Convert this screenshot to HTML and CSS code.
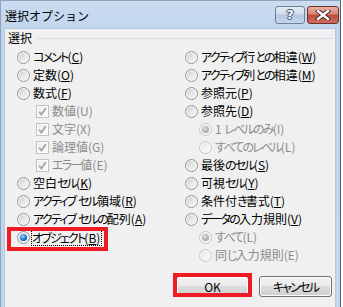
FILE: index.html
```html
<!DOCTYPE html>
<html lang="ja">
<head>
<meta charset="utf-8">
<link rel="stylesheet" href="styles.css">
</head>
<body>
<div class="window">
  <div class="titlebar">
    <span class="title">選択オプション</span>
    <div class="caption">
      <span class="cap-btn help">?</span>
      <span class="cap-btn close"><svg width="16" height="10" viewBox="0 0 16 10"><path d="M3 1 L13 9 M13 1 L3 9" stroke="#3a2020" stroke-width="4.2" stroke-linecap="square"/><path d="M3 1 L13 9 M13 1 L3 9" stroke="#ffffff" stroke-width="2.4" stroke-linecap="square"/></svg></span>
    </div>
  </div>
  <div class="client">
    <div class="group-head"><span class="group-label">選択</span><span class="group-line"></span></div>
    <div class="columns">
      <div class="col">
        <div class="row"><span class="radio"></span><span class="lbl"><span class="k">コメント</span>(<u>C</u>)</span></div>
        <div class="row"><span class="radio"></span><span class="lbl">定数(<u>O</u>)</span></div>
        <div class="row"><span class="radio"></span><span class="lbl">数式(<u>F</u>)</span></div>
        <div class="row sub"><span class="check"><svg width="13" height="13" viewBox="0 0 13 13"><path d="M3.2 6.8 L5.4 9.6 L9.8 3.2" fill="none" stroke="#a4a4a4" stroke-width="1.8"/></svg></span><span class="lbl off">数値(U)</span></div>
        <div class="row sub"><span class="check"><svg width="13" height="13" viewBox="0 0 13 13"><path d="M3.2 6.8 L5.4 9.6 L9.8 3.2" fill="none" stroke="#a4a4a4" stroke-width="1.8"/></svg></span><span class="lbl off">文字(X)</span></div>
        <div class="row sub"><span class="check"><svg width="13" height="13" viewBox="0 0 13 13"><path d="M3.2 6.8 L5.4 9.6 L9.8 3.2" fill="none" stroke="#a4a4a4" stroke-width="1.8"/></svg></span><span class="lbl off">論理値(G)</span></div>
        <div class="row sub"><span class="check"><svg width="13" height="13" viewBox="0 0 13 13"><path d="M3.2 6.8 L5.4 9.6 L9.8 3.2" fill="none" stroke="#a4a4a4" stroke-width="1.8"/></svg></span><span class="lbl off"><span class="k">エラー</span>値(E)</span></div>
        <div class="row"><span class="radio"></span><span class="lbl">空白<span class="k">セル</span>(<u>K</u>)</span></div>
        <div class="row"><span class="radio"></span><span class="lbl"><span class="k">アクティブ</span> <span class="k">セル</span>領域(<u>R</u>)</span></div>
        <div class="row"><span class="radio"></span><span class="lbl"><span class="k">アクティブ</span> <span class="k">セルの</span>配列(<u>A</u>)</span></div>
        <div class="row marked"><span class="radio on"></span><span class="lbl focus"><span class="k">オブジェクト</span>(<u>B</u>)</span></div>
      </div>
      <div class="col">
        <div class="row"><span class="radio"></span><span class="lbl"><span class="k">アクティブ</span>行<span class="k">との</span>相違(<u>W</u>)</span></div>
        <div class="row"><span class="radio"></span><span class="lbl"><span class="k">アクティブ</span>列<span class="k">との</span>相違(<u>M</u>)</span></div>
        <div class="row"><span class="radio"></span><span class="lbl">参照元(<u>P</u>)</span></div>
        <div class="row"><span class="radio"></span><span class="lbl">参照先(<u>D</u>)</span></div>
        <div class="row subr"><span class="radio dis on"></span><span class="lbl off">1 <span class="k">レベルのみ</span>(I)</span></div>
        <div class="row subr"><span class="radio dis"></span><span class="lbl off"><span class="k">すべてのレベル</span>(L)</span></div>
        <div class="row"><span class="radio"></span><span class="lbl">最後<span class="k">のセル</span>(<u>S</u>)</span></div>
        <div class="row"><span class="radio"></span><span class="lbl">可視<span class="k">セル</span>(<u>Y</u>)</span></div>
        <div class="row"><span class="radio"></span><span class="lbl">条件付<span class="k">き</span>書式(<u>T</u>)</span></div>
        <div class="row"><span class="radio"></span><span class="lbl"><span class="k">データの</span>入力規則(<u>V</u>)</span></div>
        <div class="row subr"><span class="radio dis on"></span><span class="lbl off"><span class="k">すべて</span>(L)</span></div>
        <div class="row subr"><span class="radio dis"></span><span class="lbl off">同<span class="k">じ</span>入力規則(E)</span></div>
      </div>
    </div>
    <div class="buttons">
      <span class="btn ok">OK</span>
      <span class="btn"><span class="k">キャンセル</span></span>
    </div>
  </div>
</div>
</body>
</html>
```

FILE: styles.css
```css
html, body {
  margin: 0;
  padding: 0;
  background: #ffffff;
}
body {
  width: 343px;
  height: 307px;
  overflow: hidden;
  font-family: "Noto Sans CJK JP", "Noto Sans", sans-serif;
  font-size: 12px;
  color: #000;
}
.window {
  box-sizing: border-box;
  width: 341px;
  height: 310px;
  background: linear-gradient(180deg, #cadcf0 0, #c0d5ed 30px, #c2d6ec 100%);
  border-left: 1px solid #8fa3bc;
  border-right: 1px solid #4f5d70;
  border-top: 1px solid #8fa3bc;
  display: flex;
  flex-direction: column;
  padding: 0 4px 0 3px;
}
.titlebar {
  height: 27px;
  display: flex;
  align-items: flex-start;
  justify-content: space-between;
  margin-right: -3px;
}
.title {
  font-size: 12px;
  line-height: 14px;
  margin-top: 8px;
  margin-left: 1px;
}
.caption {
  display: flex;
  gap: 2px;
  margin-top: 5px;
}
.cap-btn {
  box-sizing: border-box;
  height: 18px;
  border: 1px solid #6f7f96;
  border-radius: 3px;
  display: flex;
  align-items: center;
  justify-content: center;
}
.help {
  width: 30px;
  background: linear-gradient(180deg, #e4edf7 0, #cddcee 45%, #b4c9e2 50%, #c2d6ec 100%);
  font-family: "DejaVu Sans", sans-serif;
  font-weight: bold;
  font-size: 13px;
  color: #fff;
  text-shadow: -1px 0 #3d4c63, 1px 0 #3d4c63, 0 -1px #3d4c63, 0 1px #3d4c63;
  line-height: 16px;
}
.close {
  width: 32px;
  border-color: #6e302a;
  background: linear-gradient(180deg, #eab1a6 0, #d98273 45%, #c14b38 50%, #cf6f5e 100%);
}
.close svg { display: block; }
.client {
  flex: 1;
  background: #f0f0f0;
  border: 1px solid #b7c9de;
  border-bottom: none;
  position: relative;
}
.group-head {
  display: flex;
  align-items: center;
  height: 16px;
  margin-top: 1px;
  padding-left: 3px;
  padding-right: 2px;
}
.group-label {
  line-height: 16px;
}
.group-line {
  flex: 1;
  height: 1px;
  background: #d5dfe5;
  margin-left: 5px;
  margin-top: 1px;
}
.columns {
  display: grid;
  grid-template-columns: 180px 1fr;
  margin-top: 2px;
}
.row {
  display: flex;
  align-items: center;
  gap: 3px;
  height: 18px;
  padding-left: 12px;
  position: relative;
  white-space: pre;
  font-feature-settings: "palt";
}
.col + .col .row { padding-left: 0; }
.row.sub { padding-left: 31px; }
.col + .col .row.subr { padding-left: 14px; }
.lbl { line-height: 16px; }
.lbl u { text-underline-offset: 1px; }
.k { letter-spacing: -1.8px; }
.off { color: #8c8c8c; }
.radio {
  box-sizing: border-box;
  width: 13px;
  height: 13px;
  flex: none;
  border-radius: 50%;
  border: 1px solid #959595;
  background: linear-gradient(135deg, #c9c9c9 0, #e6e6e6 50%, #fbfbfb 100%);
  box-shadow: inset 0 0 0 1px #f8f8f8;
  position: relative;
}
.radio.on::after {
  content: "";
  position: absolute;
  left: 2px;
  top: 2px;
  width: 7px;
  height: 7px;
  border-radius: 50%;
  background: radial-gradient(circle at 40% 35%, #9fe0ff 0, #2e8fe0 40%, #0d4f9e 75%, #0a3566 100%);
}
.radio.dis {
  border-color: #c6c6c6;
  background: linear-gradient(135deg, #e3e3e3 0, #f1f1f1 50%, #fbfbfb 100%);
}
.radio.dis.on::after {
  background: radial-gradient(circle at 40% 35%, #e2e2e2 0, #b4b4b4 50%, #959595 100%);
}
.check {
  box-sizing: border-box;
  width: 13px;
  height: 13px;
  flex: none;
  border: 1px solid #c2c2c2;
  background: linear-gradient(135deg, #ececec, #fbfbfb);
  box-shadow: inset 0 0 0 1px #fbfbfb;
  position: relative;
}
.check svg {
  position: absolute;
  left: -1px;
  top: -1px;
}
.focus {
  outline: 1px dotted #000;
  outline-offset: 0;
  padding: 0 1px 0 0;
  margin-left: -1px;
  line-height: 15px;
}
.marked::after {
  content: "";
  position: absolute;
  left: 2px;
  top: -1px;
  width: 101px;
  height: 24px;
  box-sizing: border-box;
  border: 4px solid #ed1c24;
}
.buttons {
  display: flex;
  justify-content: flex-end;
  gap: 10px;
  margin-top: 12px;
  padding-right: 3px;
}
.btn {
  box-sizing: border-box;
  width: 73px;
  height: 21px;
  border: 1px solid #707070;
  border-radius: 3px;
  background: linear-gradient(180deg, #f2f2f2 0, #ebebeb 50%, #dddddd 50%, #cfcfcf 100%);
  box-shadow: inset 0 0 0 1px #fcfcfc;
  display: flex;
  align-items: center;
  justify-content: center;
  font-feature-settings: "palt";
  line-height: 16px;
}
.ok { position: relative; }
.ok::after {
  content: "";
  position: absolute;
  left: -4px;
  right: -4px;
  top: -4px;
  bottom: -1px;
  border: 4px solid #ed1c24;
}
```
